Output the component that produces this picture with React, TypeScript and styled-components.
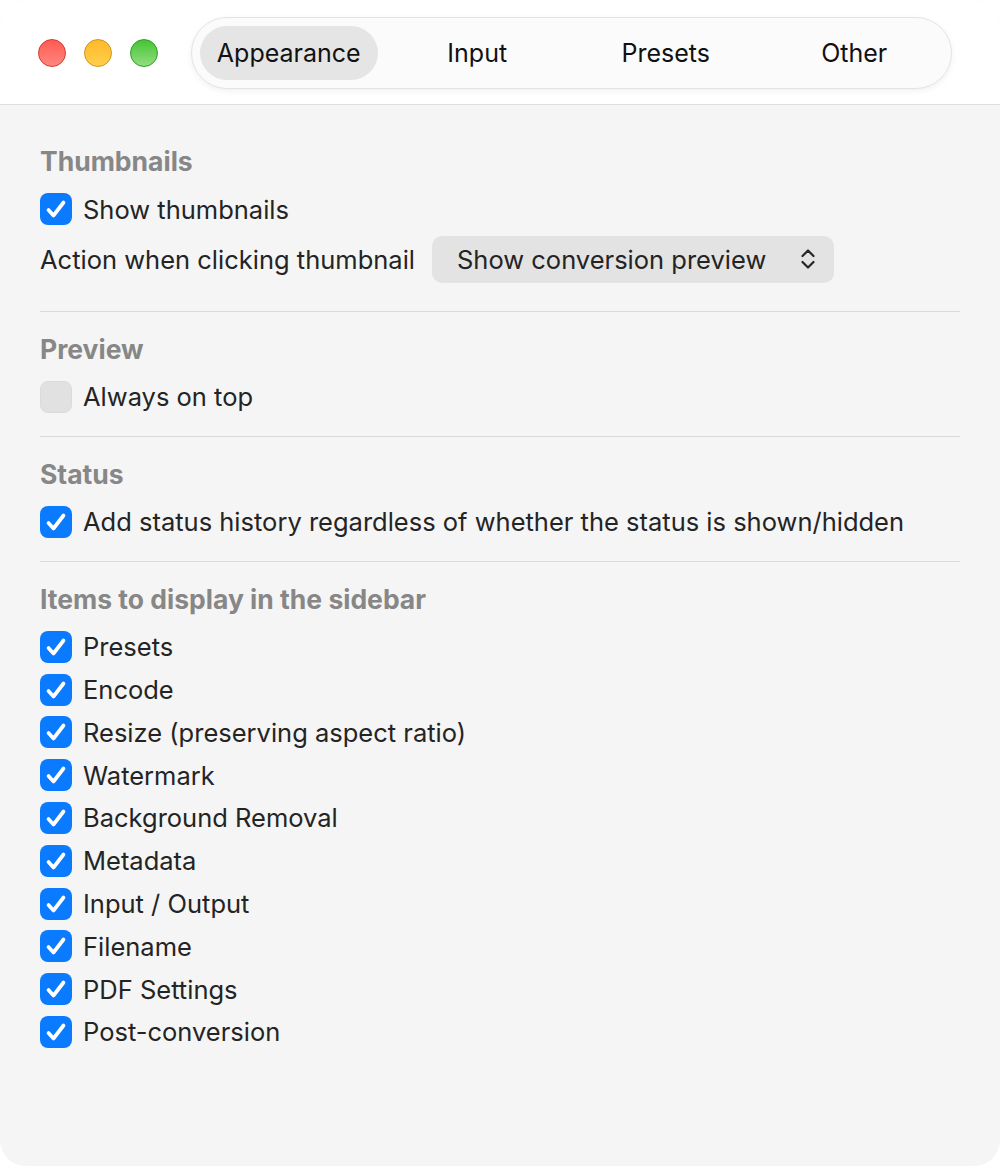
import React from 'react';
import styled, { createGlobalStyle } from 'styled-components';

const GlobalStyle = createGlobalStyle`
  html, body {
    margin: 0;
    padding: 0;
    background: #ffffff;
  }
  body {
    font-family: Inter, "Noto Sans", "Liberation Sans", sans-serif;
    -webkit-font-smoothing: antialiased;
  }
`;

const Window = styled.div`
  width: 1000px;
  height: 1166px;
  background: #f5f5f5;
  border-radius: 26px;
  overflow: hidden;
  display: flex;
  flex-direction: column;
`;

const Header = styled.div`
  height: 105px;
  flex-shrink: 0;
  background: #ffffff;
  border-bottom: 1px solid #dedede;
  display: flex;
  align-items: center;
  padding-left: 38px;
  padding-top: 2px;
  box-sizing: border-box;
`;

const Lights = styled.div`
  display: flex;
  gap: 18px;
  margin-right: 33px;
`;

const Light = styled.span<{ $top: string; $bottom: string; $edge: string }>`
  width: 28px;
  height: 28px;
  border-radius: 50%;
  box-sizing: border-box;
  background: linear-gradient(180deg, ${(p) => p.$top}, ${(p) => p.$bottom});
  border: 1px solid ${(p) => p.$edge};
`;

const TabBar = styled.div`
  width: 761px;
  height: 72px;
  box-sizing: border-box;
  border-radius: 36px;
  background: #fbfbfb;
  border: 1px solid #e3e3e3;
  box-shadow: 0 2px 6px rgba(0, 0, 0, 0.06);
  display: flex;
  align-items: center;
  gap: 11px;
  padding: 0 8px;
`;

const Tab = styled.div<{ $active?: boolean }>`
  width: 178px;
  height: 54px;
  border-radius: 27px;
  display: flex;
  align-items: center;
  justify-content: center;
  font-size: 25px;
  color: #111111;
  background: ${(p) => (p.$active ? '#e5e5e5' : 'transparent')};
`;

const Body = styled.div`
  padding: 40px 40px 0;
  display: flex;
  flex-direction: column;
`;

const Section = styled.section<{ $first?: boolean }>`
  padding: ${(p) => (p.$first ? '0' : '21px')} 0 23px;
  border-bottom: 1px solid #dadada;
  &:last-child {
    border-bottom: none;
  }
`;

const Heading = styled.h3`
  margin: 0 0 16px;
  height: 32px;
  line-height: 32px;
  font-size: 26.5px;
  font-weight: 700;
  color: #878787;
`;

const Rows = styled.div`
  display: flex;
  flex-direction: column;
  gap: 10.8px;
`;

const Row = styled.label`
  display: flex;
  align-items: center;
  height: 32px;
  font-size: 25.5px;
  color: #242424;
`;

const ActionRow = styled.div`
  display: flex;
  align-items: center;
  height: 47px;
  margin-bottom: 5px;
  font-size: 25.5px;
  color: #242424;
  gap: 17px;
`;

const Box = styled.span<{ $checked: boolean }>`
  width: 32px;
  height: 32px;
  border-radius: 8px;
  box-sizing: border-box;
  margin-right: 11px;
  flex-shrink: 0;
  display: flex;
  background: ${(p) => (p.$checked ? '#0a7aff' : '#e1e1e1')};
  border: ${(p) => (p.$checked ? 'none' : '1px solid #dbdbdb')};
`;

const Popup = styled.div`
  width: 402px;
  height: 47px;
  box-sizing: border-box;
  border-radius: 10px;
  background: #e3e3e3;
  display: flex;
  align-items: center;
  justify-content: space-between;
  padding: 0 18px 0 25px;
`;

function Check({ checked = true, label }: { checked?: boolean; label: string }) {
  return (
    <Row>
      <Box $checked={checked}>
        {checked && (
          <svg width="32" height="32" viewBox="0 0 32 32">
            <path
              d="M8.5 17 L13.5 22.5 L23.5 9.5"
              fill="none"
              stroke="#fff"
              strokeWidth="3.7"
              strokeLinecap="round"
              strokeLinejoin="round"
            />
          </svg>
        )}
      </Box>
      {label}
    </Row>
  );
}

const sidebarItems = [
  'Presets',
  'Encode',
  'Resize (preserving aspect ratio)',
  'Watermark',
  'Background Removal',
  'Metadata',
  'Input / Output',
  'Filename',
  'PDF Settings',
  'Post-conversion',
];

export default function App() {
  return (
    <>
      <GlobalStyle />
      <Window>
        <Header>
          <Lights>
            <Light $top="#ff5b52" $bottom="#ff877f" $edge="#d9342c" />
            <Light $top="#ffb92a" $bottom="#ffd04c" $edge="#cf9415" />
            <Light $top="#45c534" $bottom="#93dd80" $edge="#2a9f1f" />
          </Lights>
          <TabBar>
            <Tab $active>Appearance</Tab>
            <Tab>Input</Tab>
            <Tab>Presets</Tab>
            <Tab>Other</Tab>
          </TabBar>
        </Header>
        <Body>
          <Section $first>
            <Heading>Thumbnails</Heading>
            <Rows>
              <Check label="Show thumbnails" />
              <ActionRow>
                Action when clicking thumbnail
                <Popup>
                  Show conversion preview
                  <svg width="16" height="24" viewBox="0 0 16 24">
                    <path
                      d="M2.5 9 L8 3.5 L13.5 9 M2.5 15 L8 20.5 L13.5 15"
                      fill="none"
                      stroke="#262626"
                      strokeWidth="2.2"
                      strokeLinecap="round"
                      strokeLinejoin="round"
                    />
                  </svg>
                </Popup>
              </ActionRow>
            </Rows>
          </Section>
          <Section>
            <Heading>Preview</Heading>
            <Rows>
              <Check checked={false} label="Always on top" />
            </Rows>
          </Section>
          <Section>
            <Heading>Status</Heading>
            <Rows>
              <Check label="Add status history regardless of whether the status is shown/hidden" />
            </Rows>
          </Section>
          <Section>
            <Heading>Items to display in the sidebar</Heading>
            <Rows>
              {sidebarItems.map((item) => (
                <Check key={item} label={item} />
              ))}
            </Rows>
          </Section>
        </Body>
      </Window>
    </>
  );
}
